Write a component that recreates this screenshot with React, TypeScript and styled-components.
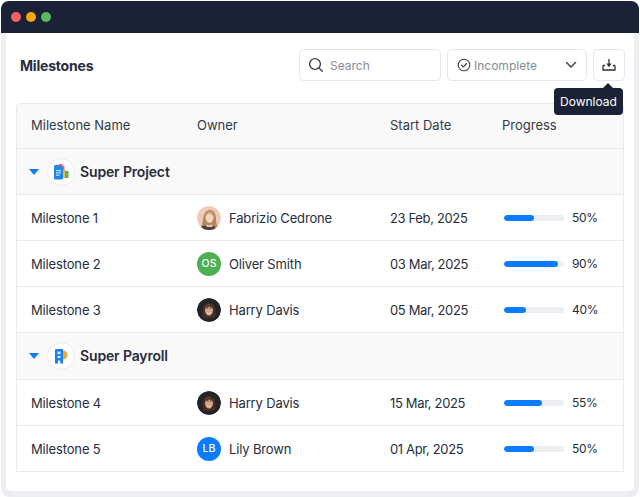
import styled, { createGlobalStyle } from 'styled-components';

const GlobalStyle = createGlobalStyle`
    html, body {
        margin: 0;
        padding: 0;
        background: #ffffff;
    }
    * {
        box-sizing: border-box;
    }
`;

type Person = 'fabrizio' | 'harry' | 'os' | 'lb';

type Milestone = {
    name: string;
    owner: string;
    person: Person;
    date: string;
    progress: number;
    // the drawn bar does not always follow the label
    bar: number;
};

const superProject: Milestone[] = [
    { name: 'Milestone 1', owner: 'Fabrizio Cedrone', person: 'fabrizio', date: '23 Feb, 2025', progress: 50, bar: 50 },
    { name: 'Milestone 2', owner: 'Oliver Smith', person: 'os', date: '03 Mar, 2025', progress: 90, bar: 90 },
    { name: 'Milestone 3', owner: 'Harry Davis', person: 'harry', date: '05 Mar, 2025', progress: 40, bar: 37 },
];

const superPayroll: Milestone[] = [
    { name: 'Milestone 4', owner: 'Harry Davis', person: 'harry', date: '15 Mar, 2025', progress: 55, bar: 63 },
    { name: 'Milestone 5', owner: 'Lily Brown', person: 'lb', date: '01 Apr, 2025', progress: 50, bar: 50 },
];

const ProjectLogo = () => (
    <svg width="16" height="18" viewBox="0 0 16 18">
        <path d="M6 1h3l2.500 2.500V7H6z" fill="#e8697a" />
        <rect x="9" y="7" width="3.500" height="8" fill="#f2b632" />
        <rect x="12" y="8" width="3.500" height="7" fill="#5cb04f" />
        <path d="M2.500 2H7l3 3v10a1.500 1.500 0 0 1-1.500 1.500h-6A1.500 1.500 0 0 1 1 15V3.500A1.500 1.500 0 0 1 2.500 2z" fill="#1e88e5" />
        <rect x="3" y="7" width="5" height="1.200" fill="#bfe0fb" />
        <rect x="3" y="9.300" width="5" height="1.200" fill="#bfe0fb" />
        <rect x="3" y="11.600" width="3.500" height="1.200" fill="#bfe0fb" />
    </svg>
);

const PayrollLogo = () => (
    <svg width="16" height="16" viewBox="0 0 16 16">
        <path d="M9 2.500h1a4.500 4.500 0 0 1 0 9H9z" fill="#f5a623" />
        <path d="M2 2a1 1 0 0 1 1-1h6a1 1 0 0 1 1 1v13.500H7.200v-3H5v3H2z" fill="#1a7ff0" />
        <path d="M4.500 3.500h3v2.800h-3zM4.500 8h3v2h-3z" fill="#d8ecff" />
    </svg>
);

const FaceFabrizio = () => (
    <svg width="24" height="24" viewBox="0 0 24 24">
        <circle cx="12" cy="12" r="12" fill="#efc9ba" />
        <path d="M3 24c2-3 2-6 3-10 .5-6 3-10 7-10 4.500 0 6 4.500 6 9 0 4 1 7 2 9l-4 2z" fill="#b08a5e" />
        <path d="M2 24c1-3 3-4 5-4.500l5 1.500 5-1 3 4z" fill="#4d4038" />
        <ellipse cx="12.500" cy="11.500" rx="4" ry="5.200" fill="#f3d3bc" />
        <path d="M9 10c1-3 3-5 5-5 1.500 1 2.500 3 2.800 5-2-1-4-2.500-5-3-.5 1-1.500 2-2.800 3z" fill="#c9a36f" />
        <path d="M10.500 14c1.200 1 3 1 4.200 0-.5 1.600-3.700 1.600-4.200 0z" fill="#ffffff" />
        <path d="M10 18.500c1.500 1 3.500 1 5 0l.5 2.500h-6z" fill="#edc8b0" />
    </svg>
);

const FaceHarry = () => (
    <svg width="24" height="24" viewBox="0 0 24 24">
        <circle cx="12" cy="12" r="12" fill="#232427" />
        <path d="M6 19c-1.500-7 0-14 6-14s7.500 7 6 14l-3 1H9z" fill="#4a2f22" />
        <ellipse cx="12" cy="12" rx="4" ry="5.500" fill="#d3a68c" />
        <path d="M8 11c.5-3 2.500-4.500 4.500-4.500S16 8.500 16 11c-1-1.500-2.500-2.500-4-2.500-1.500.5-3 1.300-4 2.500z" fill="#4a2f22" />
        <path d="M9.800 10h1.700M12.700 10h1.700" stroke="#2c1c14" strokeWidth="0.800" />
        <path d="M9.500 14c1.500 1.200 3.500 1.200 5 0-.5 2-4.500 2-5 0z" fill="#f6eee8" />
    </svg>
);

const Avatar = ({ person }: { person: Person }) => {
    if (person === 'fabrizio') {
        return <AvatarCircle><FaceFabrizio /></AvatarCircle>;
    }
    if (person === 'harry') {
        return <AvatarCircle><FaceHarry /></AvatarCircle>;
    }
    return <AvatarCircle $color={person === 'os' ? '#4caf50' : '#0a7cff'}>{person.toUpperCase()}</AvatarCircle>;
};

const MilestoneRow = ({ data }: { data: Milestone }) => (
    <Row>
        <span>{data.name}</span>
        <Owner>
            <Avatar person={data.person} />
            {data.owner}
        </Owner>
        <DateText>{data.date}</DateText>
        <Progress>
            <Track>
                <Fill style={{ width: `${data.bar}%` }} />
            </Track>
            <Percent>{data.progress}%</Percent>
        </Progress>
    </Row>
);

const App = () => (
    <Frame>
        <GlobalStyle />
        <TitleBar>
            <Dot $color="#f4605f" />
            <Dot $color="#f5a70f" />
            <Dot $color="#5cb85c" />
        </TitleBar>
        <Body>
            <Toolbar>
                <Title>Milestones</Title>
                <SearchBox>
                    <svg width="16" height="16" viewBox="0 0 16 16" fill="none" stroke="#3d4350" strokeWidth="1.400" strokeLinecap="round">
                        <circle cx="7" cy="7" r="5.400" />
                        <path d="M11 11l3.300 3.300" />
                    </svg>
                    Search
                </SearchBox>
                <SelectBox>
                    <svg width="14" height="14" viewBox="0 0 14 14" fill="none" stroke="#3d4350" strokeWidth="1.100" strokeLinecap="round" strokeLinejoin="round">
                        <circle cx="7" cy="7" r="5.800" />
                        <path d="M4.500 7.200l1.800 1.800 3.300-3.500" />
                    </svg>
                    <SelectLabel>Incomplete</SelectLabel>
                    <svg width="12" height="8" viewBox="0 0 12 8" fill="none" stroke="#3d4350" strokeWidth="1.500" strokeLinecap="round" strokeLinejoin="round">
                        <path d="M1.500 1.500L6 6l4.500-4.500" />
                    </svg>
                </SelectBox>
                <DownloadButton>
                    <svg width="14" height="12" viewBox="0 0 14 12" fill="none" stroke="#2a3040" strokeWidth="1.300">
                        <path d="M1 6.500V11h12V6.500" />
                        <path d="M1 6.500h2M11 6.500h2" />
                        <path d="M7 0v5" />
                        <path d="M4.300 4.500L7 8.300l2.700-3.800z" fill="#2a3040" stroke="none" />
                    </svg>
                    <Tooltip>Download</Tooltip>
                </DownloadButton>
            </Toolbar>
            <Table>
                <HeadRow>
                    <span>Milestone Name</span>
                    <span>Owner</span>
                    <span>Start Date</span>
                    <span>Progress</span>
                </HeadRow>
                <GroupRow>
                    <Caret />
                    <LogoCircle><ProjectLogo /></LogoCircle>
                    Super Project
                </GroupRow>
                {superProject.map((item) => (
                    <MilestoneRow key={item.name} data={item} />
                ))}
                <GroupRow $tall>
                    <Caret />
                    <LogoCircle><PayrollLogo /></LogoCircle>
                    Super Payroll
                </GroupRow>
                {superPayroll.map((item) => (
                    <MilestoneRow key={item.name} data={item} />
                ))}
            </Table>
        </Body>
    </Frame>
);

const Frame = styled.div`
    width: 638px;
    height: 496px;
    margin: 1px 0 0 1px;
    background: #eceef2;
    border-radius: 8px;
    overflow: hidden;
    font-family: 'Inter', 'Liberation Sans', sans-serif;
    color: #272d3c;
`;

const TitleBar = styled.div`
    height: 32px;
    background: #1b2238;
    display: flex;
    align-items: center;
    gap: 5px;
    padding-left: 10px;
`;

const Dot = styled.span<{ $color: string }>`
    width: 10px;
    height: 10px;
    border-radius: 50%;
    background: ${({ $color }) => $color};
`;

const Body = styled.div`
    width: 628px;
    height: 458px;
    margin-left: 5px;
    padding: 16px 10px 0;
    background: #ffffff;
    border-radius: 0 0 6px 6px;
`;

const Toolbar = styled.div`
    display: flex;
    align-items: center;
    height: 32px;
    padding-left: 4px;
    margin-right: -1px;
    margin-bottom: 22px;
`;

const Title = styled.h1`
    margin: 0 auto 0 0;
    font-size: 14px;
    font-weight: 700;
    letter-spacing: -0.2px;
`;

const Control = styled.div`
    height: 32px;
    display: flex;
    align-items: center;
    border: 1px solid #e4e7ec;
    border-radius: 5px;
    background: #ffffff;
    font-size: 12px;
    color: #868c98;
`;

const SearchBox = styled(Control)`
    width: 142px;
    padding-left: 8px;
    gap: 6px;
`;

const SelectBox = styled(Control)`
    width: 140px;
    margin-left: 6px;
    padding: 0 9px;
    gap: 3px;
`;

const SelectLabel = styled.span`
    flex: 1;
`;

const DownloadButton = styled(Control)`
    position: relative;
    width: 32px;
    margin-left: 6px;
    justify-content: center;
`;

const Tooltip = styled.div`
    position: absolute;
    top: 38px;
    right: 1px;
    width: 69px;
    height: 27px;
    display: flex;
    align-items: center;
    justify-content: center;
    border-radius: 4px;
    background: #1b2238;
    color: #ffffff;
    font-size: 12px;

    &::before {
        content: '';
        position: absolute;
        top: -5px;
        right: 10px;
        border-left: 5px solid transparent;
        border-right: 5px solid transparent;
        border-bottom: 5px solid #1b2238;
    }
`;

const Table = styled.div`
    border: 1px solid #e8eaee;
    border-radius: 4px 4px 0 0;
    width: 608px;
    font-size: 13px;
`;

const Columns = styled.div`
    display: grid;
    grid-template-columns: 166px 193px 112px 1fr;
    align-items: center;
    padding-left: 14px;
`;

const HeadRow = styled(Columns)`
    height: 45px;
    padding-bottom: 3px;
    background: #f9f9fa;
    border-bottom: 1px solid #e8eaee;
    color: #343a48;
`;

const GroupRow = styled.div<{ $tall?: boolean }>`
    height: ${({ $tall }) => ($tall ? '47px' : '46px')};
    padding-bottom: ${({ $tall }) => ($tall ? '1px' : '0')};
    display: flex;
    align-items: center;
    padding-left: 12px;
    background: #f9f9fa;
    border-bottom: 1px solid #e8eaee;
    font-size: 14px;
    font-weight: 600;
    letter-spacing: -0.15px;
`;

const Caret = styled.span`
    width: 0;
    height: 0;
    border-left: 5px solid transparent;
    border-right: 5px solid transparent;
    border-top: 6px solid #0a7cff;
    margin-right: 8px;
`;

const LogoCircle = styled.span`
    width: 28px;
    height: 28px;
    display: flex;
    align-items: center;
    justify-content: center;
    margin-right: 5px;
    border: 1px solid #e8eaee;
    border-radius: 50%;
    background: #ffffff;
`;

const Row = styled(Columns)`
    height: 46px;
    border-bottom: 1px solid #e8eaee;
    letter-spacing: -0.15px;

    &:last-child {
        border-bottom: none;
        height: 45px;
    }
`;

const Owner = styled.div`
    display: flex;
    align-items: center;
    gap: 8px;
`;

const DateText = styled.span`
    letter-spacing: -0.35px;
`;

const AvatarCircle = styled.span<{ $color?: string }>`
    width: 24px;
    height: 24px;
    display: flex;
    align-items: center;
    justify-content: center;
    border-radius: 50%;
    overflow: hidden;
    background: ${({ $color }) => $color ?? 'transparent'};
    color: #ffffff;
    font-size: 10.5px;
    font-weight: 500;
    letter-spacing: 0;
`;

const Progress = styled.div`
    display: flex;
    align-items: center;
    padding-left: 2px;
    gap: 8px;
`;

const Track = styled.div`
    width: 60px;
    height: 6px;
    border-radius: 3px;
    background: #eceef2;
    overflow: hidden;
`;

const Fill = styled.div`
    height: 100%;
    border-radius: 3px;
    background: #0a7cff;
`;

const Percent = styled.span`
    font-size: 12px;
    letter-spacing: -0.35px;
`;

export default App;
